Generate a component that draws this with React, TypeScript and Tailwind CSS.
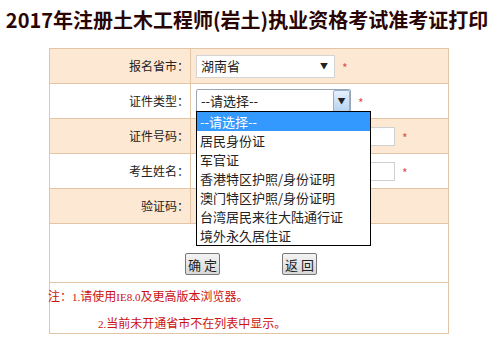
import React from 'react';

const options = [
  '--请选择--',
  '居民身份证',
  '军官证',
  '香港特区护照/身份证明',
  '澳门特区护照/身份证明',
  '台湾居民来往大陆通行证',
  '境外永久居住证',
];

function Star() {
  return <span className="text-[#d9534f] text-[12px] leading-none ml-[7px] mt-[4px]">*</span>;
}

function Label({ text }: { text: string }) {
  return (
    <div className="flex items-center justify-end pr-[1px] text-[12px] text-[#222] border-r border-[#e2c4a6]">
      {text}
    </div>
  );
}

export default function App() {
  return (
    <div className="w-[494px] h-[338px] bg-white font-['Noto_Sans_CJK_SC',sans-serif] text-[#222] overflow-hidden">
      {/* Title */}
      <div className="h-[48px] pt-[8px] text-center text-[20px] leading-[24px] font-bold text-[#2a0505]">
        2017年注册土木工程师(岩土)执业资格考试准考证打印
      </div>

      {/* Form table */}
      <div className="relative ml-[49px] w-[400px] border border-[#e2c4a6]">
        <div className="grid grid-cols-[141px_1fr] h-[35px] bg-[#fde9d3] border-b border-[#e2c4a6]">
          <Label text="报名省市：" />
          <div className="flex items-center pl-[5px]">
            <div className="w-[139px] h-[23px] bg-white border border-[#d4d4d4] flex items-center justify-between pl-[4px] pr-[6px] text-[13px]">
              <span>湖南省</span>
              <span className="text-[8px] leading-none">▼</span>
            </div>
            <Star />
          </div>
        </div>

        <div className="grid grid-cols-[141px_1fr] h-[35px] bg-white border-b border-[#e2c4a6]">
          <Label text="证件类型：" />
          <div className="flex items-center pl-[5px]">
            <div className="w-[155px] h-[24px] bg-white border border-[#9aa6b4] rounded-[2px] flex items-center justify-between pl-[4px] text-[13px]">
              <span>--请选择--</span>
              <span className="w-[17px] h-[22px] border border-[#8fb0d4] rounded-[2px] bg-gradient-to-b from-[#e6f1fc] to-[#b7d3f1] flex items-center justify-center text-[8px] leading-none">▼</span>
            </div>
            <Star />
          </div>
        </div>

        <div className="grid grid-cols-[141px_1fr] h-[35px] bg-[#fde9d3] border-b border-[#e2c4a6]">
          <Label text="证件号码：" />
          <div className="flex items-center pl-[5px]">
            <div className="w-[199px] h-[19px] bg-white border border-[#d0d0d0]" />
            <Star />
          </div>
        </div>

        <div className="grid grid-cols-[141px_1fr] h-[35px] bg-white border-b border-[#e2c4a6]">
          <Label text="考生姓名：" />
          <div className="flex items-center pl-[5px]">
            <div className="w-[199px] h-[19px] bg-white border border-[#d0d0d0]" />
            <Star />
          </div>
        </div>

        <div className="grid grid-cols-[141px_1fr] h-[35px] bg-[#fde9d3] border-b border-[#e2c4a6]">
          <Label text="验证码：" />
          <div />
        </div>

        <div className="h-[59px] flex items-start justify-center gap-[62px] pt-[29px] pl-[4px] border-b border-[#e2c4a6]">
          <button className="w-[35px] h-[22px] border border-[#777] rounded-[2px] bg-gradient-to-b from-[#f4f4f4] to-[#d8d8d8] text-[13px] leading-none">确 定</button>
          <button className="w-[35px] h-[22px] border border-[#777] rounded-[2px] bg-gradient-to-b from-[#f4f4f4] to-[#d8d8d8] text-[13px] leading-none">返 回</button>
        </div>

        <div className="h-[50px] text-[12px] text-[#cc1111] leading-[25px] -ml-[2px]">
          <div>
            注：<span className="font-['Liberation_Serif',serif] text-[11px]">1.</span>请使用<span className="font-['Liberation_Serif',serif] text-[11px]">IE8.0</span>及更高版本浏览器。
          </div>
          <div className="pl-[50px]">
            <span className="font-['Liberation_Serif',serif] text-[11px]">2.</span>当前未开通省市不在列表中显示。
          </div>
        </div>

        {/* Open dropdown list */}
        <div className="absolute left-[146px] top-[62px] w-[175px] bg-white border border-black text-[13px]">
          {options.map((o, i) => (
            <div
              key={o}
              className={`h-[19px] leading-[19px] px-[3px] ${i === 0 ? 'bg-[#3399ff] text-white' : 'text-[#222]'}`}
            >
              {o}
            </div>
          ))}
        </div>
      </div>
    </div>
  );
}
